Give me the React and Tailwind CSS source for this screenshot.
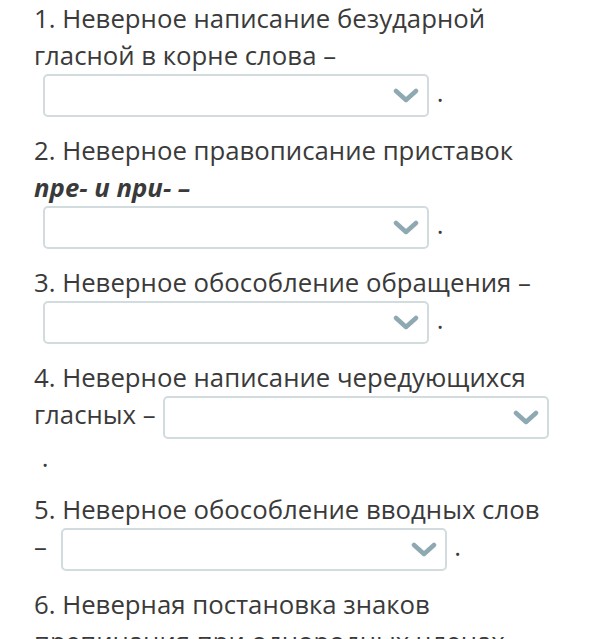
import React from "react";

function Select({ className = "" }) {
  return (
    <span
      className={`inline-flex align-middle items-center justify-end w-[386px] h-[43px] border-2 border-[#d2dbde] rounded-[5px] bg-white pr-[8px] ${className}`}
    >
      <svg width="26" height="16" viewBox="0 0 26 16" fill="none">
        <path d="M3 3 L13 12 L23 3" stroke="#8ea9b2" strokeWidth="4.5" strokeLinecap="round" strokeLinejoin="round" />
      </svg>
    </span>
  );
}

export default function App() {
  return (
    <div
      className="w-[592px] h-[639px] overflow-hidden bg-white pl-[34px] pr-[38px] text-[25.75px] leading-[37px] text-[#3a3a3a]"
      style={{ fontFamily: '"Open Sans", sans-serif' }}
    >
      <p className="mb-[15px]">
        1. Неверное написание безударной гласной в корне слова –{" "}
        <Select className="ml-[9px]" />
        <span className="ml-[1px]">{"\u00a0"}.</span>
      </p>
      <p className="mb-[15px]">
        2. Неверное правописание приставок{" "}
        <b className="italic font-bold">пре- и при- –</b>{" "}
        <Select className="ml-[9px]" />
        <span className="ml-[1px]">{"\u00a0"}.</span>
      </p>
      <p className="mb-[15px]">
        3. Неверное обособление обращения –{" "}
        <Select className="ml-[9px]" />
        <span className="ml-[1px]">{"\u00a0"}.</span>
      </p>
      <p className="mb-[15px]">
        4. Неверное написание чередующихся гласных –{" "}
        <Select className="ml-[1px]" />
        <span className="ml-[1px]">{"\u00a0"}.</span>
      </p>
      <p className="mb-[15px]">
        5. Неверное обособление вводных слов –{" "}
        <Select className="ml-[7px]" />
        <span className="ml-[1px]">{"\u00a0"}.</span>
      </p>
      <p className="mb-[15px]">
        6. Неверная постановка знаков препинания при однородных членах
      </p>
    </div>
  );
}
